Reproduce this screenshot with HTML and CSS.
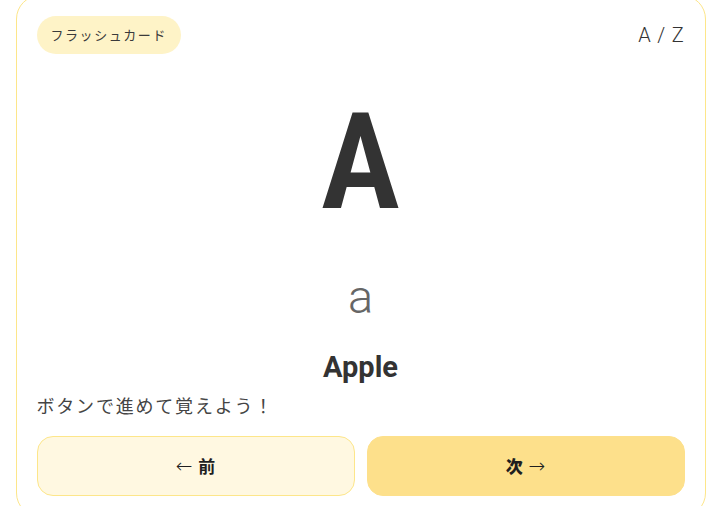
FILE: index.html
```html
<!DOCTYPE html>
<html lang="ja">
<head>
<meta charset="utf-8">
<title>フラッシュカード</title>
<link rel="stylesheet" href="styles.css">
</head>
<body>
<main class="card">
  <header class="card-head">
    <span class="pill">フラッシュカード</span>
    <span class="counter">A / Z</span>
  </header>
  <div class="upper">A</div>
  <div class="lower">a</div>
  <div class="word">Apple</div>
  <p class="hint">ボタンで進めて覚えよう！</p>
  <div class="nav">
    <button class="btn btn-prev" type="button"><span class="arrow arrow-left">←</span> 前</button>
    <button class="btn btn-next" type="button">次 <span class="arrow arrow-right">→</span></button>
  </div>
</main>
</body>
</html>
```

FILE: styles.css
```css
* { box-sizing: border-box; }
html, body { margin: 0; padding: 0; }
body {
  height: 100vh;
  padding-top: 5px;
  display: flex;
  align-items: center;
  justify-content: center;
  background: #ffffff;
  font-family: Roboto, "Noto Sans CJK JP", sans-serif;
  color: #333333;
}
.card {
  width: 690px;
  flex-shrink: 0;
  border: 1px solid #fde68a;
  border-radius: 24px;
  padding: 20px;
  display: flex;
  flex-direction: column;
  background: #ffffff;
}
.card-head {
  display: flex;
  justify-content: space-between;
  align-items: center;
  height: 38px;
}
.pill {
  background: #fef3c7;
  border-radius: 999px;
  height: 38px;
  padding: 0 14px;
  display: flex;
  align-items: center;
  font-family: "Noto Sans CJK JP", sans-serif;
  font-size: 13px;
  letter-spacing: 0.12em;
  color: #3a3a3a;
}
.counter {
  font-size: 20px;
  font-weight: 300;
  letter-spacing: 0.04em;
  color: #333333;
}
.upper {
  margin-top: 42px;
  text-align: center;
  font-size: 134px;
  line-height: 1;
  font-weight: 600;
  font-stretch: 85%;
  color: #333333;
}
.lower {
  margin-top: 43px;
  text-align: center;
  font-size: 47px;
  line-height: 1;
  font-weight: 300;
  color: #666666;
}
.word {
  margin-top: 33px;
  text-align: center;
  font-size: 29px;
  line-height: 1;
  font-weight: 700;
  color: #333333;
}
.hint {
  margin: 10px 0 0;
  font-family: "Noto Sans CJK JP", sans-serif;
  font-size: 18px;
  line-height: 1.5;
  letter-spacing: 0.1em;
  color: #444444;
}
.nav {
  margin-top: 17px;
  display: grid;
  grid-template-columns: 1fr 1fr;
  gap: 12px;
}
.btn {
  height: 60px;
  border-radius: 16px;
  font-family: "Noto Sans CJK JP", sans-serif;
  font-size: 17px;
  color: #1f1f1f;
  cursor: pointer;
}
.arrow {
  font-family: "DejaVu Sans", sans-serif;
  font-size: 20px;
  font-weight: 200;
}
.arrow-left { margin-right: 2px; }
.arrow-right { margin-left: 2px; }
.btn-prev {
  background: #fff8e1;
  border: 1px solid #fde68a;
  font-weight: 600;
}
.btn-next {
  background: #fde08b;
  border: 1px solid #fde08b;
  font-weight: 800;
}
```
